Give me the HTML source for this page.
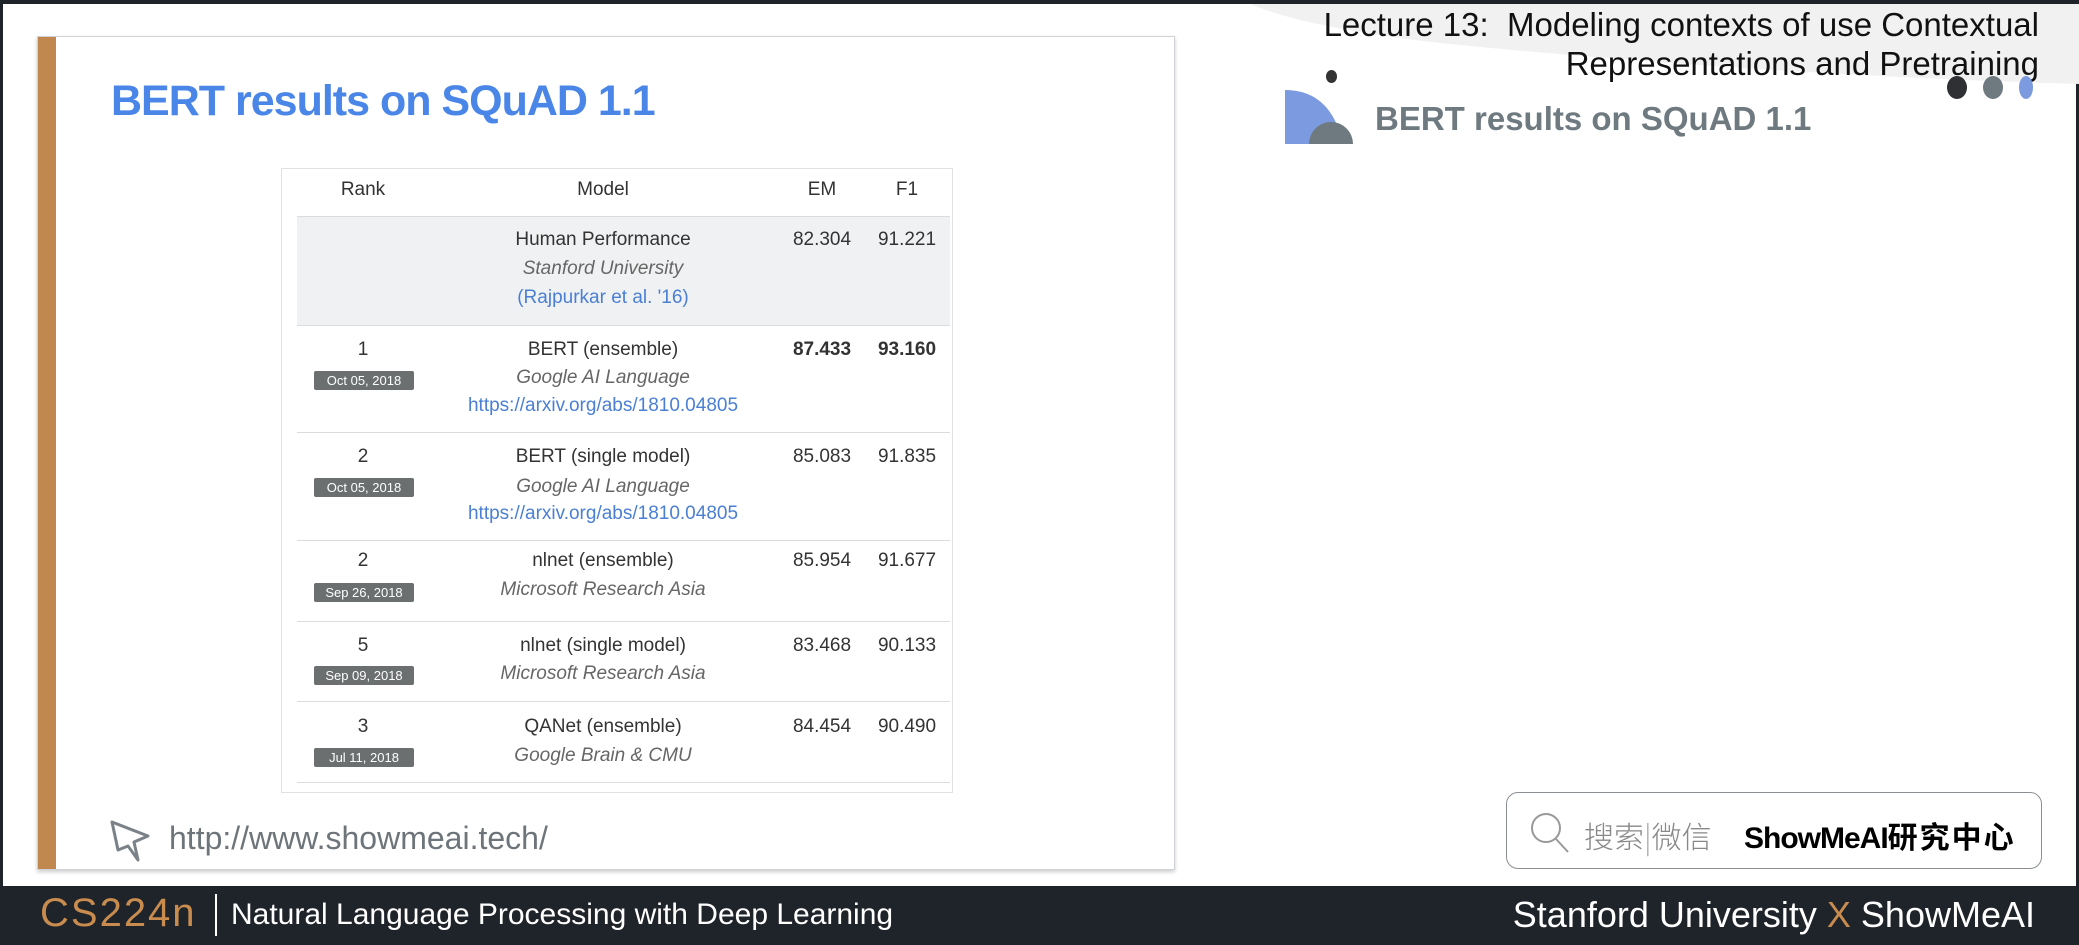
<!DOCTYPE html>
<html><head><meta charset="utf-8"><style>
*{margin:0;padding:0;box-sizing:border-box}
body{width:2079px;height:945px;position:relative;overflow:hidden;background:#fff;font-family:"Liberation Sans","Noto Sans CJK SC",sans-serif}
.a{position:absolute;white-space:nowrap}
.c{position:absolute;width:400px;text-align:center;font-size:19px;line-height:24px;color:#333;white-space:nowrap}
.i{font-style:italic;color:#666}
.l{color:#4a7fd4}
.b{font-weight:bold}
.badge{position:absolute;left:314px;width:100px;height:19px;background:#6b6f70;color:#fff;font-size:13px;line-height:19px;text-align:center;border-radius:2px}
.hl{position:absolute;left:297px;width:653px;height:1px;background:#dcdcdc}
</style></head><body>
<div class="a" style="left:0;top:0;width:2079px;height:4px;background:#1f232a"></div>
<div class="a" style="left:0;top:0;width:3px;height:945px;background:#1f232a"></div>
<div class="a" style="right:0;top:0;width:3px;height:945px;background:#1f232a"></div>
<svg class="a" style="left:1250px;top:4px" width="829" height="110"><path d="M0 0 H829 V80 Q500 70 200 40 Q60 25 0 0Z" fill="#f1f1f1"/></svg>
<div class="a" style="right:40px;top:5px;font-size:33px;line-height:39px;text-align:right;color:#111">Lecture 13:&nbsp; Modeling contexts of use Contextual<br>Representations and Pretraining</div>
<div class="a" style="left:1326px;top:70px;width:11px;height:13px;border-radius:50%;background:#333"></div>
<div class="a" style="left:1947px;top:76px;width:20px;height:23px;border-radius:50%;background:#2e3033"></div>
<div class="a" style="left:1983px;top:76px;width:20px;height:23px;border-radius:50%;background:#6e7a80"></div>
<div class="a" style="left:2019px;top:76px;width:14px;height:23px;border-radius:50%;background:#7b9ae0"></div>
<svg class="a" style="left:1285px;top:88px" width="85" height="58"><path d="M0 56 V2 Q46 2 58 56Z" fill="#7b9ae0"/><path d="M24 56 A22 22 0 0 1 68 56Z" fill="#6e7a80"/></svg>
<div class="a b" style="left:1375px;top:100px;font-size:33px;color:#6e7a80">BERT results on SQuAD 1.1</div>
<div class="a" style="left:37px;top:36px;width:1138px;height:834px;border:1px solid #cfd3d6;box-shadow:0 2px 4px rgba(0,0,0,.2);background:#fff"></div>
<div class="a" style="left:38px;top:37px;width:18px;height:832px;background:#c0874f"></div>
<div class="a b" style="left:111px;top:77px;font-size:43px;color:#4a86e8;letter-spacing:-1px">BERT results on SQuAD 1.1</div>
<div class="a" style="left:281px;top:168px;width:672px;height:625px;border:1px solid #dfe1e3"></div>
<div class="a" style="left:297px;top:216px;width:653px;height:109px;background:#f0f1f2"></div>
<div class="hl" style="top:216px"></div><div class="hl" style="top:325px"></div><div class="hl" style="top:432px"></div><div class="hl" style="top:540px"></div><div class="hl" style="top:621px"></div><div class="hl" style="top:701px"></div><div class="hl" style="top:782px"></div>
<div class="c" style="left:163px;top:178px">Rank</div>
<div class="c" style="left:403px;top:178px">Model</div>
<div class="c" style="left:622px;top:178px">EM</div>
<div class="c" style="left:707px;top:178px">F1</div>

<div class="c" style="left:403px;top:228px">Human Performance</div>
<div class="c i" style="left:403px;top:257px">Stanford University</div>
<div class="c l" style="left:403px;top:286px">(Rajpurkar et al. '16)</div>
<div class="c" style="left:622px;top:228px">82.304</div><div class="c" style="left:707px;top:228px">91.221</div>

<div class="c" style="left:163px;top:338px">1</div><div class="badge" style="top:371px">Oct 05, 2018</div>
<div class="c" style="left:403px;top:338px">BERT (ensemble)</div>
<div class="c i" style="left:403px;top:366px">Google AI Language</div>
<div class="c l" style="left:403px;top:394px">https://arxiv.org/abs/1810.04805</div>
<div class="c b" style="left:622px;top:338px">87.433</div><div class="c b" style="left:707px;top:338px">93.160</div>

<div class="c" style="left:163px;top:445px">2</div><div class="badge" style="top:478px">Oct 05, 2018</div>
<div class="c" style="left:403px;top:445px">BERT (single model)</div>
<div class="c i" style="left:403px;top:475px">Google AI Language</div>
<div class="c l" style="left:403px;top:502px">https://arxiv.org/abs/1810.04805</div>
<div class="c" style="left:622px;top:445px">85.083</div><div class="c" style="left:707px;top:445px">91.835</div>

<div class="c" style="left:163px;top:549px">2</div><div class="badge" style="top:583px">Sep 26, 2018</div>
<div class="c" style="left:403px;top:549px">nlnet (ensemble)</div>
<div class="c i" style="left:403px;top:578px">Microsoft Research Asia</div>
<div class="c" style="left:622px;top:549px">85.954</div><div class="c" style="left:707px;top:549px">91.677</div>

<div class="c" style="left:163px;top:634px">5</div><div class="badge" style="top:666px">Sep 09, 2018</div>
<div class="c" style="left:403px;top:634px">nlnet (single model)</div>
<div class="c i" style="left:403px;top:662px">Microsoft Research Asia</div>
<div class="c" style="left:622px;top:634px">83.468</div><div class="c" style="left:707px;top:634px">90.133</div>

<div class="c" style="left:163px;top:715px">3</div><div class="badge" style="top:748px">Jul 11, 2018</div>
<div class="c" style="left:403px;top:715px">QANet (ensemble)</div>
<div class="c i" style="left:403px;top:744px">Google Brain &amp; CMU</div>
<div class="c" style="left:622px;top:715px">84.454</div><div class="c" style="left:707px;top:715px">90.490</div>
<svg class="a" style="left:108px;top:816px" width="46" height="48"><path d="M4 6 L40 20 L26 26 L30 44 L20 30 L10 34 Z" fill="none" stroke="#7a8288" stroke-width="3" stroke-linejoin="round"/></svg>
<div class="a" style="left:169px;top:820px;font-size:32px;color:#6e757a">http://www.showmeai.tech/</div>
<div class="a" style="left:1506px;top:792px;width:536px;height:77px;border:1.5px solid #8a8f93;border-radius:12px"></div>
<svg class="a" style="left:1528px;top:810px" width="46" height="46"><circle cx="18" cy="18" r="14" fill="none" stroke="#999" stroke-width="2"/><path d="M28 29 L40 42" stroke="#999" stroke-width="2"/></svg>
<div class="a" style="left:1584px;top:813px;font-size:30px;color:#888;font-family:'Noto Sans CJK SC',sans-serif;font-weight:300">搜索<span style="color:#aaa">|</span>微信</div>
<div class="a" style="left:1744px;top:813px;font-size:30px;color:#000;font-weight:bold;font-family:'Liberation Sans','Noto Sans CJK SC',sans-serif;letter-spacing:-1px">ShowMeAI<span style="font-family:'Noto Sans CJK SC',sans-serif;letter-spacing:2px">研究中心</span></div>
<div class="a" style="left:0;top:886px;width:2079px;height:59px;background:#1f232a"></div>
<div class="a" style="left:40px;top:891px;font-size:40px;color:#c98c4f;letter-spacing:2px">CS224n</div>
<div class="a" style="left:215px;top:894px;width:2px;height:42px;background:#fff"></div>
<div class="a" style="left:231px;top:898px;font-size:30px;color:#fff">Natural Language Processing with Deep Learning</div>
<div class="a" style="right:44px;top:894px;font-size:36px;color:#fff">Stanford University <span style="color:#c98c4f">X</span> ShowMeAI</div>
</body></html>
